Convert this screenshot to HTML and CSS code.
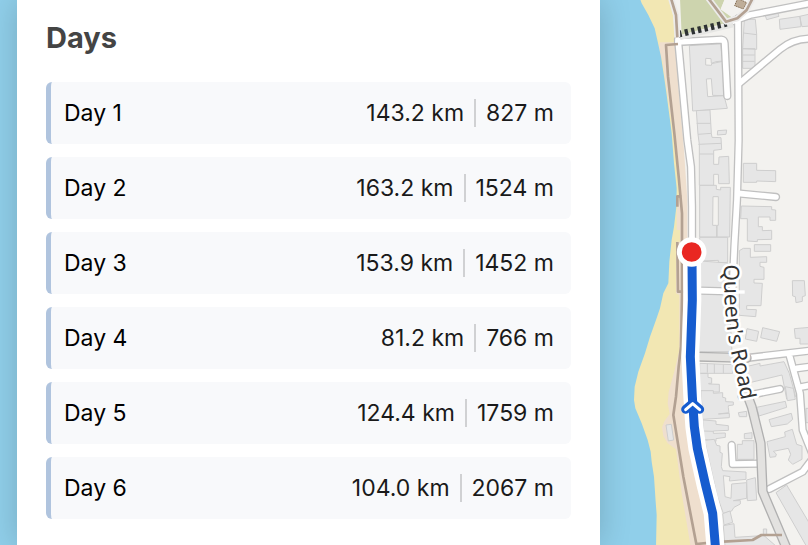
FILE: index.html
```html
<!DOCTYPE html>
<html lang="en">
<head>
<meta charset="utf-8">
<title>Days</title>
<link rel="stylesheet" href="styles.css">
</head>
<body>
<svg class="map" viewBox="0 0 808 545" preserveAspectRatio="xMaxYMin slice" role="img" aria-label="Route map">
  <g transform="translate(600 0) scale(0.333333)">
    <path class="land" d="M100-10H700V1700H100z"/>
    <!-- shore -->
    <path class="beach" d="M100-10H208L220 50 226 120 232 300 250 500V900L240 1060 230 1240 240 1400 280 1640H100z"/>
    <path class="promenade" d="M178 127H232L236 270 252 450 262 600V1080L256 1170 280 1300 332 1550 342 1640H272L245 1480 228 1348 203 1330 190 1308 186 1282 194 1262 209 1242 203 1210 206 1176 224 1110 238 1050V885L228 880V725H240V690H230V630L240 580 226 450 208 320 197 250 188 185 178 150z"/>
    <path class="sea" d="M-1900-10H118L125 10 145 45 164 85 172 120 183 170 193 235 200 285 210 360 215 400 222 490 230 565 229 620 222 680 215 720 208 785 205 850 190 880 180 925 168 960 150 1010 135 1060 115 1115 104 1160 102 1200 106 1225 125 1270 143 1320 152 1355 155 1385 162 1430 167 1505 170 1545 168 1640H-1900z"/>
    <!-- park -->
    <path class="park" d="M240-5H375L362 28 395 50 380 68 245 104z"/>
    <path class="land" d="M376-5H450L420 52 395 52 362 28z"/>
    <path class="hut" d="M413-5L440 8 430 27 404 17z"/>
    <!-- buildings -->
    <g class="building">
      <path d="M268 137L362 132 368 183 348 185 334 190 333 176 317 175V195L334 196 335 191 368 184 372 287 338 286 334 236 319 237 323 290 372 287 382 325 278 333z"/>
      <path d="M433 58H466L470 102V148L428 146zM430 99L470 104M428 146H465V205H428zM428 165H464M428 184H464"/>
      <path d="M496 47L533 38 537 49 500 59zM538 58L600 49 603 80 540 88zM599 49L630 42V78L606 80z"/>
      <path d="M289 332L330 330 334 400 336 412 363 413 365 448 341 451V493H356L357 471 386 469 388 551H356L355 523H341V556H298V433L294 403zM290 370H332M294 403L334 400M298 462H340M295 433L363 430M353 392L380 390 378 403 352 405z"/>
      <path d="M299 556H349V568L362 570V562H391L389 711H351V676H355V590H339L338 676H350V711H299z"/>
      <path d="M299 712H383V787L355 789V781L299 783z"/>
      <path d="M299 783L384 789 388 905 396 1055H298z"/>
      <path d="M430 490H470V511L527 512V545L470 543V547H430z"/>
      <path d="M424 618L515 620V629L527 630V661H510V651H475V680H487V692L515 691V718L472 719V725L442 723V656H422z"/>
      <path d="M463 734H512V754H463zM418 752L430 745H451V772L500 770V787H480V799L492 802V838H462V849L487 850 483 917H440V928L469 929 467 950 418 946z"/>
      <path d="M441 986L476 994 470 1024 436 1017zM488 983L539 995 530 1024 482 1013zM577 842H613L616 887 607 890V904L588 908 586 890 578 888zM583 986L630 982V1032H600V1015H586z"/>
      <path d="M299 1090L398 1094V1120H299zM322 1090V1118M343 1092V1120M370 1093V1120M299 1120H324V1132L335 1134V1150H326V1152L358 1153V1176H336V1188L320 1190H299z"/>
      <path d="M430 1102L480 1090V1098L552 1085 568 1120 587 1190 560 1197 546 1125 432 1152z"/>
      <path d="M303 1172H340V1180L368 1178V1192L377 1194V1205L400 1206V1215L385 1217V1223L387 1238 355 1242 388 1240V1253L308 1258z"/>
      <path d="M308 1260L348 1263V1273L385 1277V1291L340 1293V1300L376 1299V1312L348 1316V1324L312 1318zM309 1293L340 1294"/>
      <path d="M314 1321L343 1318 350 1336 360 1338V1357L367 1360 364 1400 368 1412 438 1416V1438L388 1443 390 1430 370 1427 375 1490 393 1495 395 1452 440 1448V1495L400 1502 421 1502V1512L402 1522 395 1533 370 1540 352 1490z"/>
      <path d="M440 1440L466 1433 470 1500 442 1502zM368 1541L390 1533 398 1567 372 1575zM370 1577L402 1571 405 1612 500 1606V1587H490V1605L530 1640H375z"/>
      <path d="M427 1322H462V1378H412V1333H427zM433 1301L456 1298V1316H433zM415 1238L440 1234V1250H418z"/>
      <path d="M470 1222L556 1204 560 1222 477 1248zM507 1259L574 1240 578 1258 562 1272 514 1280zM501 1325L556 1310 554 1296 577 1288 590 1333 606 1338V1378L578 1393 565 1380 572 1363 565 1345 520 1354 529 1362 527 1370 510 1372z"/>
      <path d="M528 1478L560 1455 640 1590V1660L620 1640z"/>
      <path d="M556 1160L580 1165 586 1198 562 1202zM618 1225H640V1268H618z"/>
      <path d="M198 1275L214 1273 221 1320 205 1323z"/>
    </g>
    <!-- streets -->
    <g class="casing">
      <path d="M234 126L364 119Q373 120 374 130L382 288"/>
      <path d="M234 118L262 420 273 500 276 620V760"/>
      <path d="M395 65L450 45 630 10M414 55L416 420 411 600 403 740 396 900"/>
      <path d="M418 250L540 148Q580 116 630 116"/>
      <path d="M414 580L528 591"/>
      <path d="M300 872L385 874"/>
      <path d="M440 1074L630 1052M568 1065L600 1180 608 1290 640 1370"/>
      <path d="M590 1105L630 1100M603 1161L630 1156"/>
      <path d="M425 1190L540 1167"/>
      <path d="M395 1335L398 1392 478 1391"/>
      <path d="M508 1467L608 1415 650 1360"/>
    </g>
    <g class="street">
      <path d="M234 126L364 119Q373 120 374 130L382 288"/>
      <path d="M234 118L262 420 273 500 276 620V760"/>
      <path d="M395 65L450 45 630 10M414 55L416 420 411 600 403 740 396 900"/>
      <path d="M418 250L540 148Q580 116 630 116"/>
      <path d="M414 580L528 591"/>
      <path d="M300 872L385 874"/>
      <path d="M440 1074L630 1052M568 1065L600 1180 608 1290 640 1370"/>
      <path d="M590 1105L630 1100M603 1161L630 1156"/>
      <path d="M425 1190L540 1167"/>
      <path d="M395 1335L398 1392 478 1391"/>
      <path d="M508 1467L608 1415 650 1360"/>
    </g>
    <path class="alley" d="M385 876H434"/>
    <path class="casing grey" d="M295 1070L440 1074M440 1180L455 1220 482 1330 488 1475 560 1645"/>
    <path class="grey-fill" d="M295 1070L440 1074M440 1180L455 1220 482 1330 488 1475 560 1645"/>
    <!-- footpaths -->
    <path class="pier" d="M240 113L400 75"/>
    <path class="steps" d="M235 103L380 70"/>
    <g class="path-edge">
      <path d="M213-5L228 45 232 112M325-5L378 65 412 55 440 30 458-5"/>
    </g>
    <g class="path">
      <path d="M213-5L228 45 232 112M325-5L378 65 412 55 440 30 458-5"/>
      <path d="M234 132L198 135 204 230 223 400 236 530 246 640V880L243 1040 236 1100 228 1190 220 1245 250 1430 289 1632 340 1627"/>
      <path d="M244 589H232V620M232 726L234 875H250"/>
      <path d="M370 1625L458 1620 484 1605H546"/>
    </g>
    <!-- route -->
    <path class="route-halo" d="M276 780L277 900 271 1070 277 1190 283 1280 292 1345 318 1460 338 1540 347 1650"/>
    <path class="route" d="M276 780L277 900 271 1070 277 1190 283 1280 292 1345 318 1460 338 1540 347 1650"/>
    <path class="arrow-edge" d="M257 1228L278 1210 299 1228"/>
    <path class="arrow" d="M257 1229L278 1211 299 1229"/>
    <circle class="marker" cx="275" cy="756" r="37"/>
    <path id="road-name" fill="none" d="M371 793Q372 960 392 1050T436 1260"/>
    <text class="road-label"><textPath href="#road-name">Queen's Road</textPath></text>
  </g>
</svg>
<main class="panel">
  <h2 class="title">Days</h2>
  <ul class="days">
    <li class="day"><span class="name">Day 1</span><span class="distance">143.2 km</span><span class="climb">827 m</span></li>
    <li class="day"><span class="name">Day 2</span><span class="distance">163.2 km</span><span class="climb">1524 m</span></li>
    <li class="day"><span class="name">Day 3</span><span class="distance">153.9 km</span><span class="climb">1452 m</span></li>
    <li class="day"><span class="name">Day 4</span><span class="distance">81.2 km</span><span class="climb">766 m</span></li>
    <li class="day"><span class="name">Day 5</span><span class="distance">124.4 km</span><span class="climb">1759 m</span></li>
    <li class="day"><span class="name">Day 6</span><span class="distance">104.0 km</span><span class="climb">2067 m</span></li>
  </ul>
</main>
</body>
</html>
```
FILE: styles.css
```css
* { box-sizing: border-box; }
body {
  margin: 0;
  padding: 0 208px 0 17px;
  background: #90cfea;
  font-family: Inter, "Liberation Sans", sans-serif;
}
.panel {
  position: relative;
  min-height: 100vh;
  padding: 18px 29px 24px;
  background: #fff;
  box-shadow: 0 0 30px rgba(0, 0, 0, 0.18);
}
.title {
  margin: 0 0 24px;
  font-size: 29px;
  line-height: 40px;
  font-weight: 700;
  color: #444;
}
.days {
  display: flex;
  flex-direction: column;
  gap: 13px;
  margin: 0;
  padding: 0;
  list-style: none;
}
.day {
  display: flex;
  align-items: center;
  padding: 17px 17px 17px 13px;
  border-left: 5px solid #b0c4de;
  border-radius: 6px;
  background: #f8f9fb;
  font-size: 23px;
  line-height: 28px;
  color: #1a1a1a;
}
.name { flex: 1; color: #000; }
.distance { padding-right: 10px; }
.climb {
  padding-left: 10px;
  border-left: 2px solid #d0d1d3;
}

.map {
  position: absolute;
  top: 0;
  left: 0;
  width: 100%;
  height: 100%;
}
.map path { stroke-linejoin: round; }
.land { fill: #f3f2ef; }
.beach { fill: #f2e7b3; }
.promenade { fill: #efdfce; }
.sea { fill: #90cfea; }
.park { fill: #cdd4ae; }
.hut { fill: #bfae99; stroke: #81694f; stroke-width: 3; stroke-dasharray: 4 2; }
.building { fill: #e6e6e6; stroke: #cecece; stroke-width: 3; }
.casing, .street, .grey-fill { fill: none; stroke-linecap: round; }
.casing { stroke: #c0c0c0; stroke-width: 25; }
.street { stroke: #fff; stroke-width: 17; }
.casing.grey { stroke: #b0b0b0; stroke-width: 30; }
.grey-fill { stroke: #e3e2e0; stroke-width: 22; }
.alley { fill: none; stroke: #fff; stroke-width: 10; }
.pier { fill: none; stroke: #e6e6e4; stroke-width: 14; }
.steps { fill: none; stroke: #2d3133; stroke-width: 20; stroke-dasharray: 10 10; }
.path-edge { fill: none; stroke: #ecebea; stroke-width: 18; }
.path { fill: none; stroke: #b3a192; stroke-width: 8; }
.route-halo { fill: none; stroke: #fff; stroke-width: 54; }
.route { fill: none; stroke: #165ccf; stroke-width: 27; }
.arrow-edge, .arrow { fill: none; stroke-linecap: round; }
.arrow-edge { stroke: #165ccf; stroke-width: 27; }
.arrow { stroke: #fff; stroke-width: 9; }
.marker { fill: #e92722; stroke: #fff; stroke-width: 15; }
.road-label {
  font-family: "Noto Sans", sans-serif;
  font-size: 64px;
  fill: #333;
  stroke: #fff;
  stroke-width: 15px;
  stroke-linejoin: round;
  paint-order: stroke;
}
```
